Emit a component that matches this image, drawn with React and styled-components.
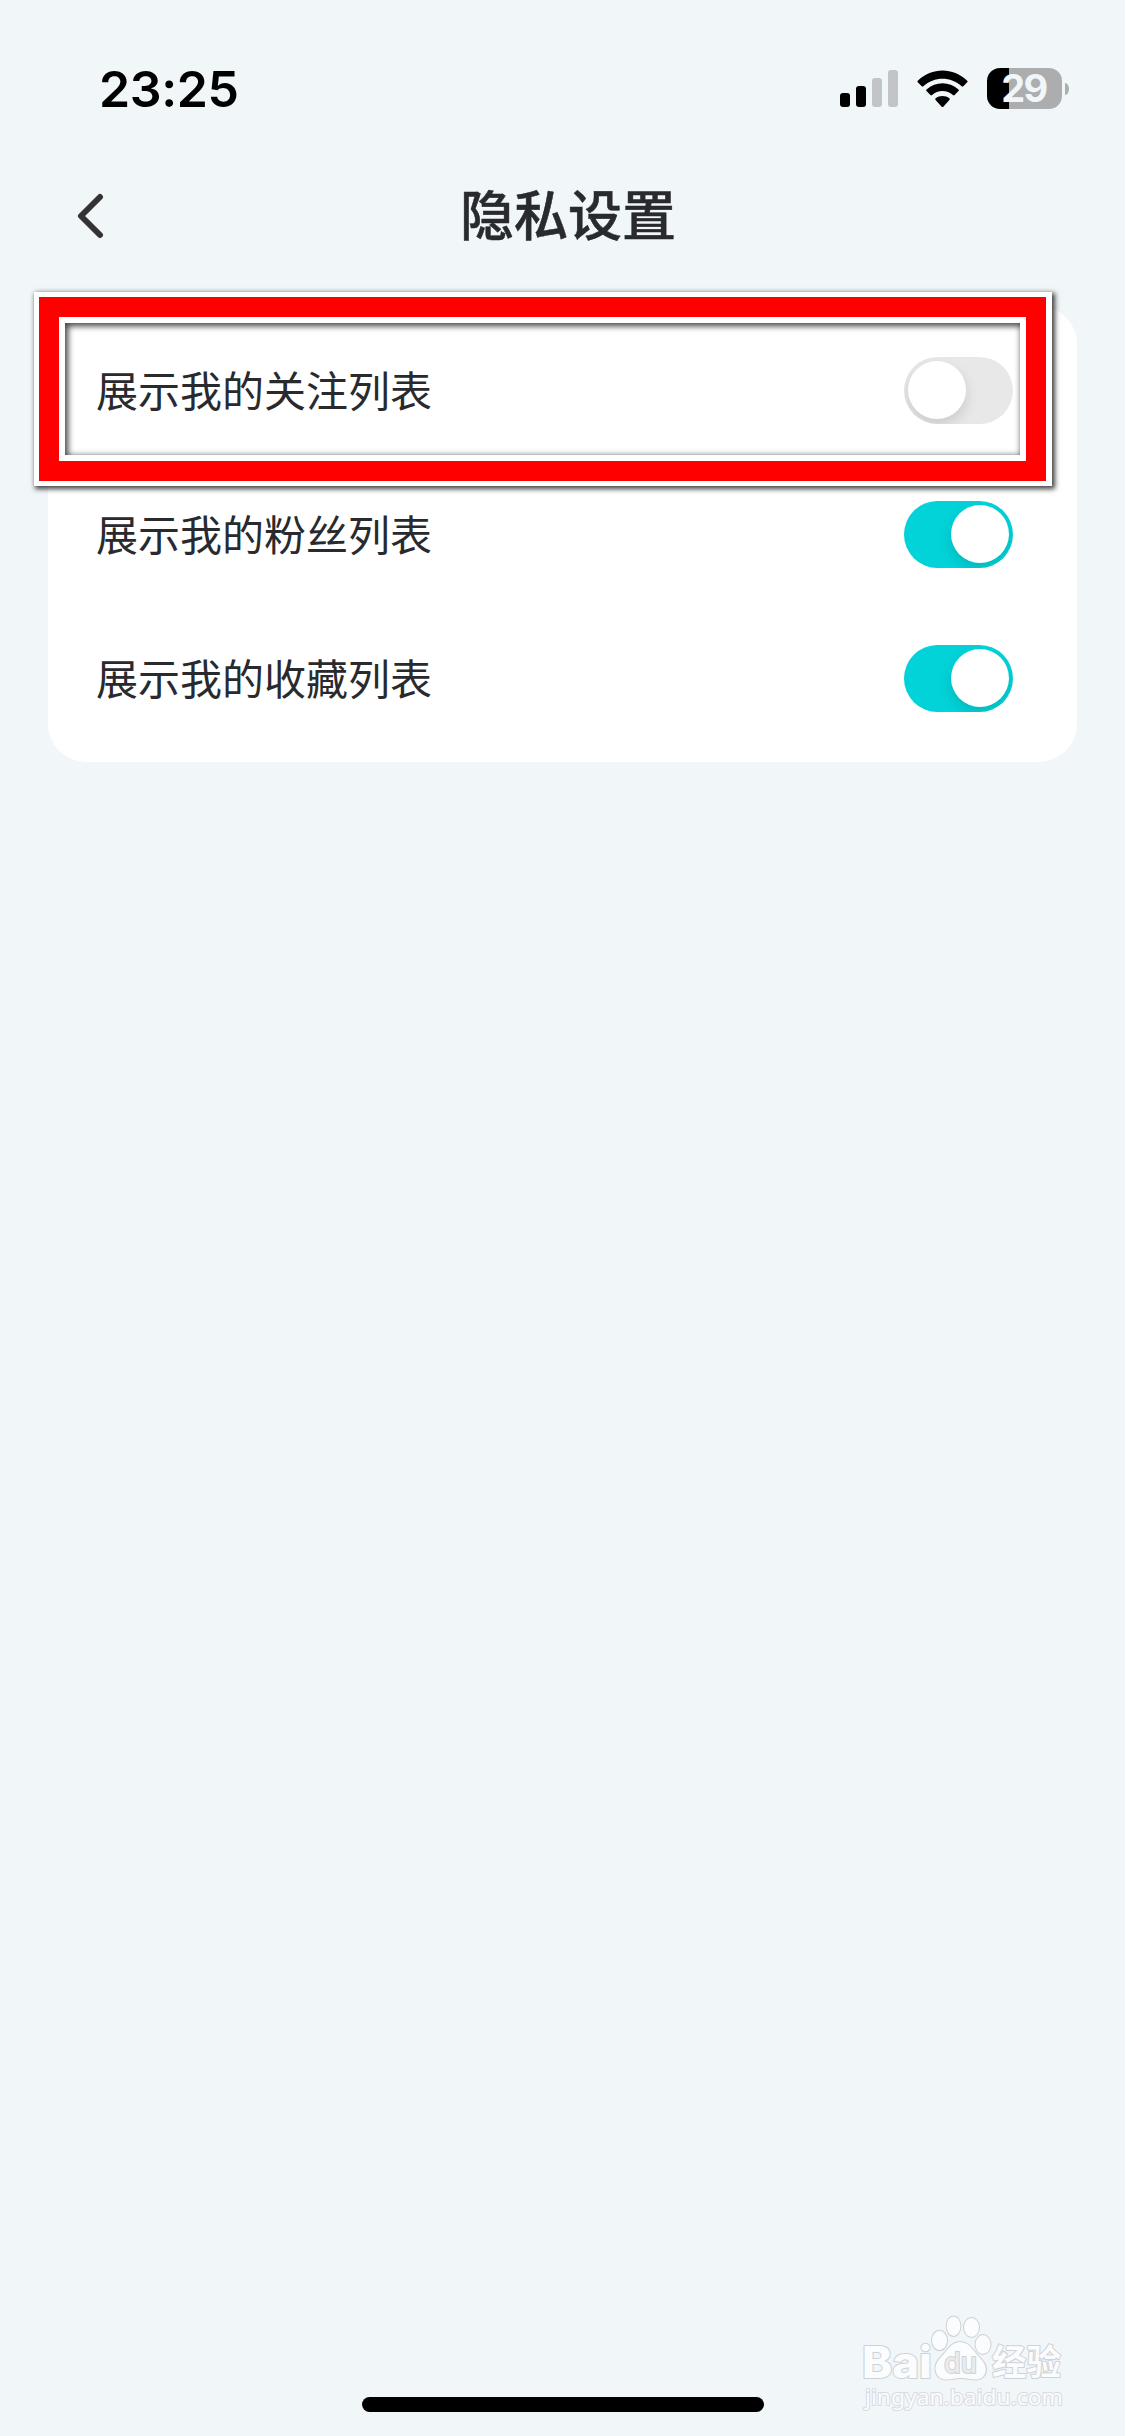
import React, { useState } from "react";
import styled, { createGlobalStyle } from "styled-components";

const GlobalStyle = createGlobalStyle`
  * { box-sizing: border-box; }
  body { margin: 0; background: #f1f6f9; }
`;

const Screen = styled.div`
  width: 1125px;
  height: 2436px;
  display: flex;
  flex-direction: column;
  position: relative;
  overflow: hidden;
  background: #f1f6f9;
  color: #292a2e;
  font-family: "Noto Sans CJK SC", "Noto Sans", sans-serif;
`;

const StatusBar = styled.header`
  height: 150px;
  flex: none;
  display: flex;
  justify-content: space-between;
  padding: 59px 56px 0 99px;
`;

const Clock = styled.time`
  height: 60px;
  font: 600 50px/60px Inter, "Liberation Sans", sans-serif;
  letter-spacing: -0.4px;
  color: #000;
`;

const StatusIcons = styled.div`
  display: flex;
  align-items: center;
  height: 59px;
`;

const SignalIcon = styled.svg`
  width: 58px;
  height: 38px;
  margin-right: 19px;
`;

const WifiIcon = styled.svg`
  width: 51px;
  height: 38px;
  margin-right: 19px;
`;

const Battery = styled.div`
  width: 75px;
  height: 41px;
  border-radius: 13px;
  background: linear-gradient(90deg, #000 22px, #acadaf 22px);
  display: flex;
  align-items: center;
  justify-content: center;
  padding-right: 1px;
  color: #f1f6f9;
  font: 700 38px/41px Inter, "Liberation Sans", sans-serif;
  letter-spacing: -1.6px;
`;

const BatteryTip = styled.div`
  width: 4px;
  height: 12px;
  margin-left: 3px;
  margin-top: 1px;
  border-radius: 0 4px 4px 0 / 0 6px 6px 0;
  background: #acadaf;
`;

const NavBar = styled.nav`
  height: 156px;
  flex: none;
  display: grid;
  grid-template-columns: 200px 1fr 200px;
  align-items: start;
  padding-top: 23px;
`;

const BackButton = styled.button`
  height: 86px;
  padding: 0 0 0 75px;
  border: 0;
  background: none;
  display: flex;
  align-items: center;
`;

const Title = styled.h1`
  margin: 0;
  text-align: center;
  font-size: 54px;
  line-height: 80px;
  font-weight: 500;
  padding-left: 11px;
  -webkit-text-stroke: 0.5px #292a2e;
`;

const Card = styled.section`
  margin: 0 48px;
  padding: 12px 64px 12px 48px;
  height: 456px;
  flex: none;
  border-radius: 38px;
  background: #fff;
`;

const Row = styled.div`
  height: 144px;
  display: flex;
  align-items: center;
  justify-content: space-between;
`;

const Label = styled.span`
  font-size: 42px;
  line-height: 60px;
  font-weight: 400;
  padding-bottom: 3px;
`;

const Switch = styled.button`
  width: 109px;
  height: 67px;
  padding: 0 4px;
  border: 0;
  border-radius: 34px;
  overflow: hidden;
  display: flex;
  align-items: center;
  justify-content: ${(p) => (p.$on ? "flex-end" : "flex-start")};
  background: ${(p) => (p.$on ? "#02d3d9" : "#e8e8e8")};
`;

const Knob = styled.span`
  width: 58px;
  height: 58px;
  border-radius: 50%;
  background: #fff;
  box-shadow: 0 6px 14px rgba(0, 0, 0, 0.13);
`;

const Highlight = styled.div`
  position: absolute;
  left: 34px;
  top: 292px;
  width: 1018px;
  height: 194px;
  border: solid #fff;
  border-width: 5px 6px 5px 5px;
  box-shadow: 2px 2px 5px 1px rgba(0, 0, 0, 0.75);
  pointer-events: none;
  display: flex;
`;

const HighlightBand = styled.div`
  flex: 1;
  border: 20px solid #f00;
  display: flex;
`;

const HighlightInner = styled.div`
  flex: 1;
  border: 6px solid #fff;
  box-shadow: inset 2px 2px 6px 1px rgba(0, 0, 0, 0.75);
`;

const HomeIndicator = styled.div`
  width: 402px;
  height: 15px;
  margin: auto auto 24px 362px;
  border-radius: 8px;
  background: #000;
`;

const Watermark = styled.svg`
  position: absolute;
  left: 855px;
  top: 2308px;
  width: 220px;
  height: 108px;
`;

const rows = [
  { label: "展示我的关注列表", on: false },
  { label: "展示我的粉丝列表", on: true },
  { label: "展示我的收藏列表", on: true },
];

function SettingRow({ label, initial }) {
  const [on, setOn] = useState(initial);
  return (
    <Row>
      <Label>{label}</Label>
      <Switch $on={on} role="switch" aria-checked={on} aria-label={label} onClick={() => setOn(!on)}>
        <Knob />
      </Switch>
    </Row>
  );
}

function BaiduWatermark() {
  return (
    <Watermark viewBox="0 0 220 108">
      <g fill="#fafcfe" stroke="#ced1d5" strokeWidth="2" paintOrder="stroke" strokeLinejoin="round">
        <text x="7" y="70" fontSize="44" fontFamily="Inter, Liberation Sans, sans-serif" fontWeight="800" textLength="70" lengthAdjust="spacingAndGlyphs">Bai</text>
        <g strokeWidth="2">
          <ellipse cx="84.500" cy="32.500" rx="7.500" ry="9.700" />
          <ellipse cx="98.500" cy="18.200" rx="6.900" ry="9.700" />
          <ellipse cx="116.500" cy="19.500" rx="7.500" ry="9.500" />
          <ellipse cx="128" cy="36.500" rx="7.500" ry="9.500" />
          <path d="M105 34C96 34 92 43 86 49C79 56 79 64 84 69C90 74 98 70 106 70C114 70 122 74 128 69C133 63 131 56 125 50C118 43 115 34 105 34Z" />
        </g>
        <text x="89" y="65" fontSize="29" fontFamily="Inter, Liberation Sans, sans-serif" fontWeight="500" textLength="33" lengthAdjust="spacingAndGlyphs" fill="#e9ecef">du</text>
        <text x="137" y="67" fontSize="35" fontFamily="Noto Sans CJK SC, sans-serif" fontWeight="700" textLength="69" lengthAdjust="spacingAndGlyphs">经验</text>
        <text x="10" y="97" fontSize="22" fontFamily="Noto Sans, sans-serif" textLength="198" lengthAdjust="spacingAndGlyphs" stroke="#d8dbdf">jingyan.baidu.com</text>
      </g>
    </Watermark>
  );
}

export default function App() {
  return (
    <Screen>
      <GlobalStyle />
      <StatusBar>
        <Clock>23:25</Clock>
        <StatusIcons>
          <SignalIcon viewBox="0 0 58 38">
            <rect x="0" y="23" width="10" height="14" rx="3" />
            <rect x="16" y="16" width="10" height="21" rx="3" />
            <rect x="32" y="8" width="10" height="29" rx="3" fill="#c2c4c7" />
            <rect x="48" y="0" width="10" height="37" rx="3" fill="#c2c4c7" />
          </SignalIcon>
          <WifiIcon viewBox="0 0 51 38">
            <path d="M0.800 10.700C15 -3 36 -3 50.200 10.700Q51 11.500 50.200 12.300L46.300 16.200Q45.500 17 44.600 16.200C34 6.200 17 6.200 6.400 16.200Q5.500 17 4.700 16.200L0.800 12.300Q0 11.500 0.800 10.700Z" />
            <path d="M9.500 19.500C19 11 32 11 41.500 19.500Q42.300 20.300 41.500 21.100L37.600 25Q36.800 25.800 35.900 25C30 19.800 21 19.800 15.100 25Q14.200 25.800 13.400 25L9.500 21.100Q8.700 20.300 9.500 19.500Z" />
            <path d="M18.600 28.200C22.500 25.100 28.500 25.100 32.400 28.200Q33.200 29 32.400 29.900L26.300 36.700Q25.500 37.500 24.700 36.700L18.600 29.900Q17.800 29 18.600 28.200Z" />
          </WifiIcon>
          <Battery>29</Battery>
          <BatteryTip />
        </StatusIcons>
      </StatusBar>
      <NavBar>
        <BackButton aria-label="返回">
          <svg width="30" height="46" viewBox="0 0 30 46" fill="none" stroke="#333" strokeWidth="6" strokeLinecap="round" strokeLinejoin="round">
            <path d="M25 4L6 23L25 42" />
          </svg>
        </BackButton>
        <Title>隐私设置</Title>
      </NavBar>
      <Card>
        {rows.map((r) => (
          <SettingRow key={r.label} label={r.label} initial={r.on} />
        ))}
      </Card>
      <Highlight>
        <HighlightBand>
          <HighlightInner />
        </HighlightBand>
      </Highlight>
      <BaiduWatermark />
      <HomeIndicator />
    </Screen>
  );
}
